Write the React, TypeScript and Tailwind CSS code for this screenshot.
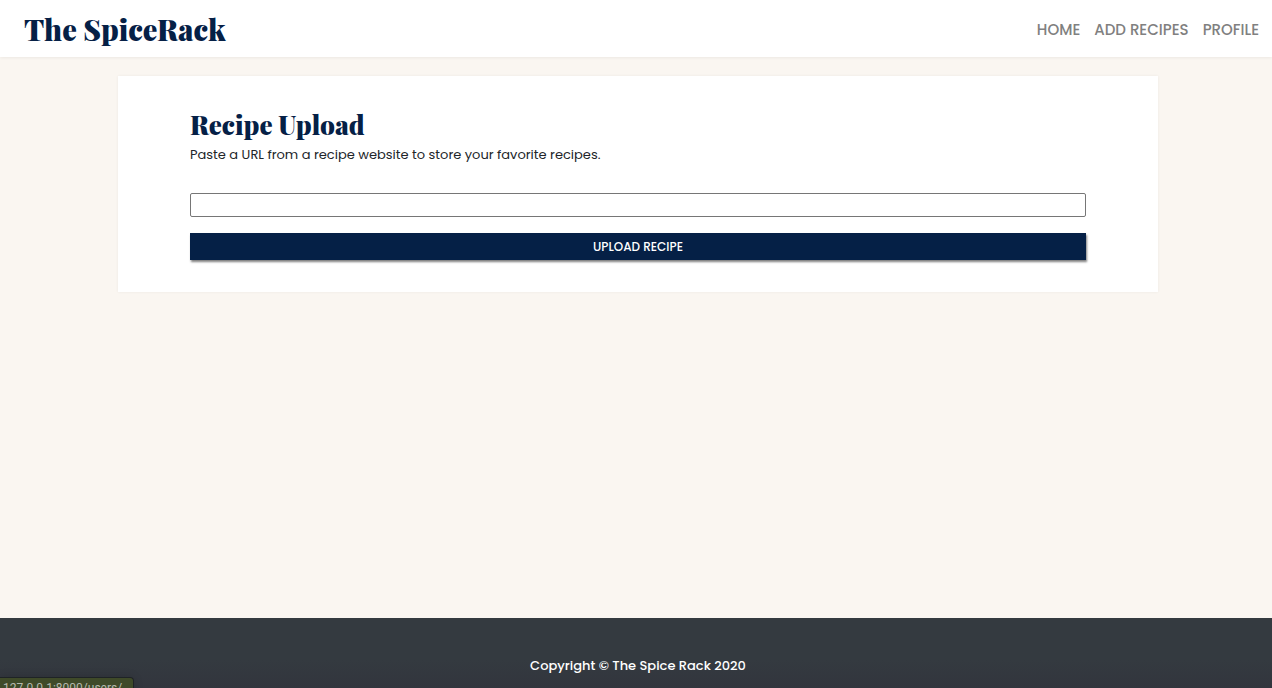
const links = ["Home", "Add Recipes", "Profile"];

function Header() {
  return (
    <header className="flex h-[57px] items-center justify-between bg-white pl-6 pr-[13px] shadow-[0_1px_3px_rgba(0,0,0,0.06)]">
      <a
        href="#"
        className="whitespace-nowrap font-['Playfair_Display','Liberation_Serif',serif] text-[29px] font-black leading-8 text-[#052046]"
      >
        The SpiceRack
      </a>
      <nav className="flex gap-3.5 pt-0.5 text-[15px] font-medium uppercase leading-6 text-[#808080]">
        {links.map((label) => (
          <a key={label} href="#" className="whitespace-nowrap">
            {label}
          </a>
        ))}
      </nav>
    </header>
  );
}

function UploadCard() {
  return (
    <section className="mx-auto w-full max-w-[1040px] bg-white px-[72px] py-8 shadow-[0_0_3px_rgba(0,0,0,0.06)]">
      <h1 className="font-['Playfair_Display','Liberation_Serif',serif] text-[26px] font-black leading-[34px] text-[#052046]">
        Recipe Upload
      </h1>
      <p className="pt-[3px] text-[13px] leading-5 text-[#212529]">
        <label htmlFor="recipe-url">
          Paste a URL from a recipe website to store your favorite recipes.
        </label>
      </p>
      <form className="mt-7 flex flex-col gap-4" onSubmit={(e) => e.preventDefault()}>
        <input
          id="recipe-url"
          type="text"
          className="h-6 w-full rounded-xs border border-[#767676] bg-white px-1 text-[13px]"
        />
        <button
          type="submit"
          className="h-[27px] w-full bg-[#052046] text-[12px] font-medium uppercase text-white shadow-[1px_2px_2px_rgba(0,0,0,0.5)]"
        >
          Upload Recipe
        </button>
      </form>
    </section>
  );
}

export default function App() {
  return (
    <div className="relative flex h-screen flex-col overflow-hidden bg-[#faf6f1] font-['Poppins','Inter',sans-serif]">
      <Header />
      <main className="grow pl-1 pt-[19px]">
        <UploadCard />
      </main>
      <footer className="h-[70px] bg-linear-to-b from-[#343a40] from-60% to-[#32353d] pl-1 pt-[38px] text-center text-[13px] font-medium leading-5 text-white">
        Copyright © The Spice Rack 2020
      </footer>
      <div className="absolute -bottom-2 left-0 h-[19px] w-[134px] whitespace-nowrap rounded-tr border-r border-t border-[#1f2326] bg-[#3f4a29] pl-[3px] pt-0.5 font-['Roboto',sans-serif] text-[12px] leading-4 text-[#b5b9ae] shadow-[0_0_10px_rgba(0,0,0,0.15)]">
        127.0.0.1:8000/users/
      </div>
    </div>
  );
}
